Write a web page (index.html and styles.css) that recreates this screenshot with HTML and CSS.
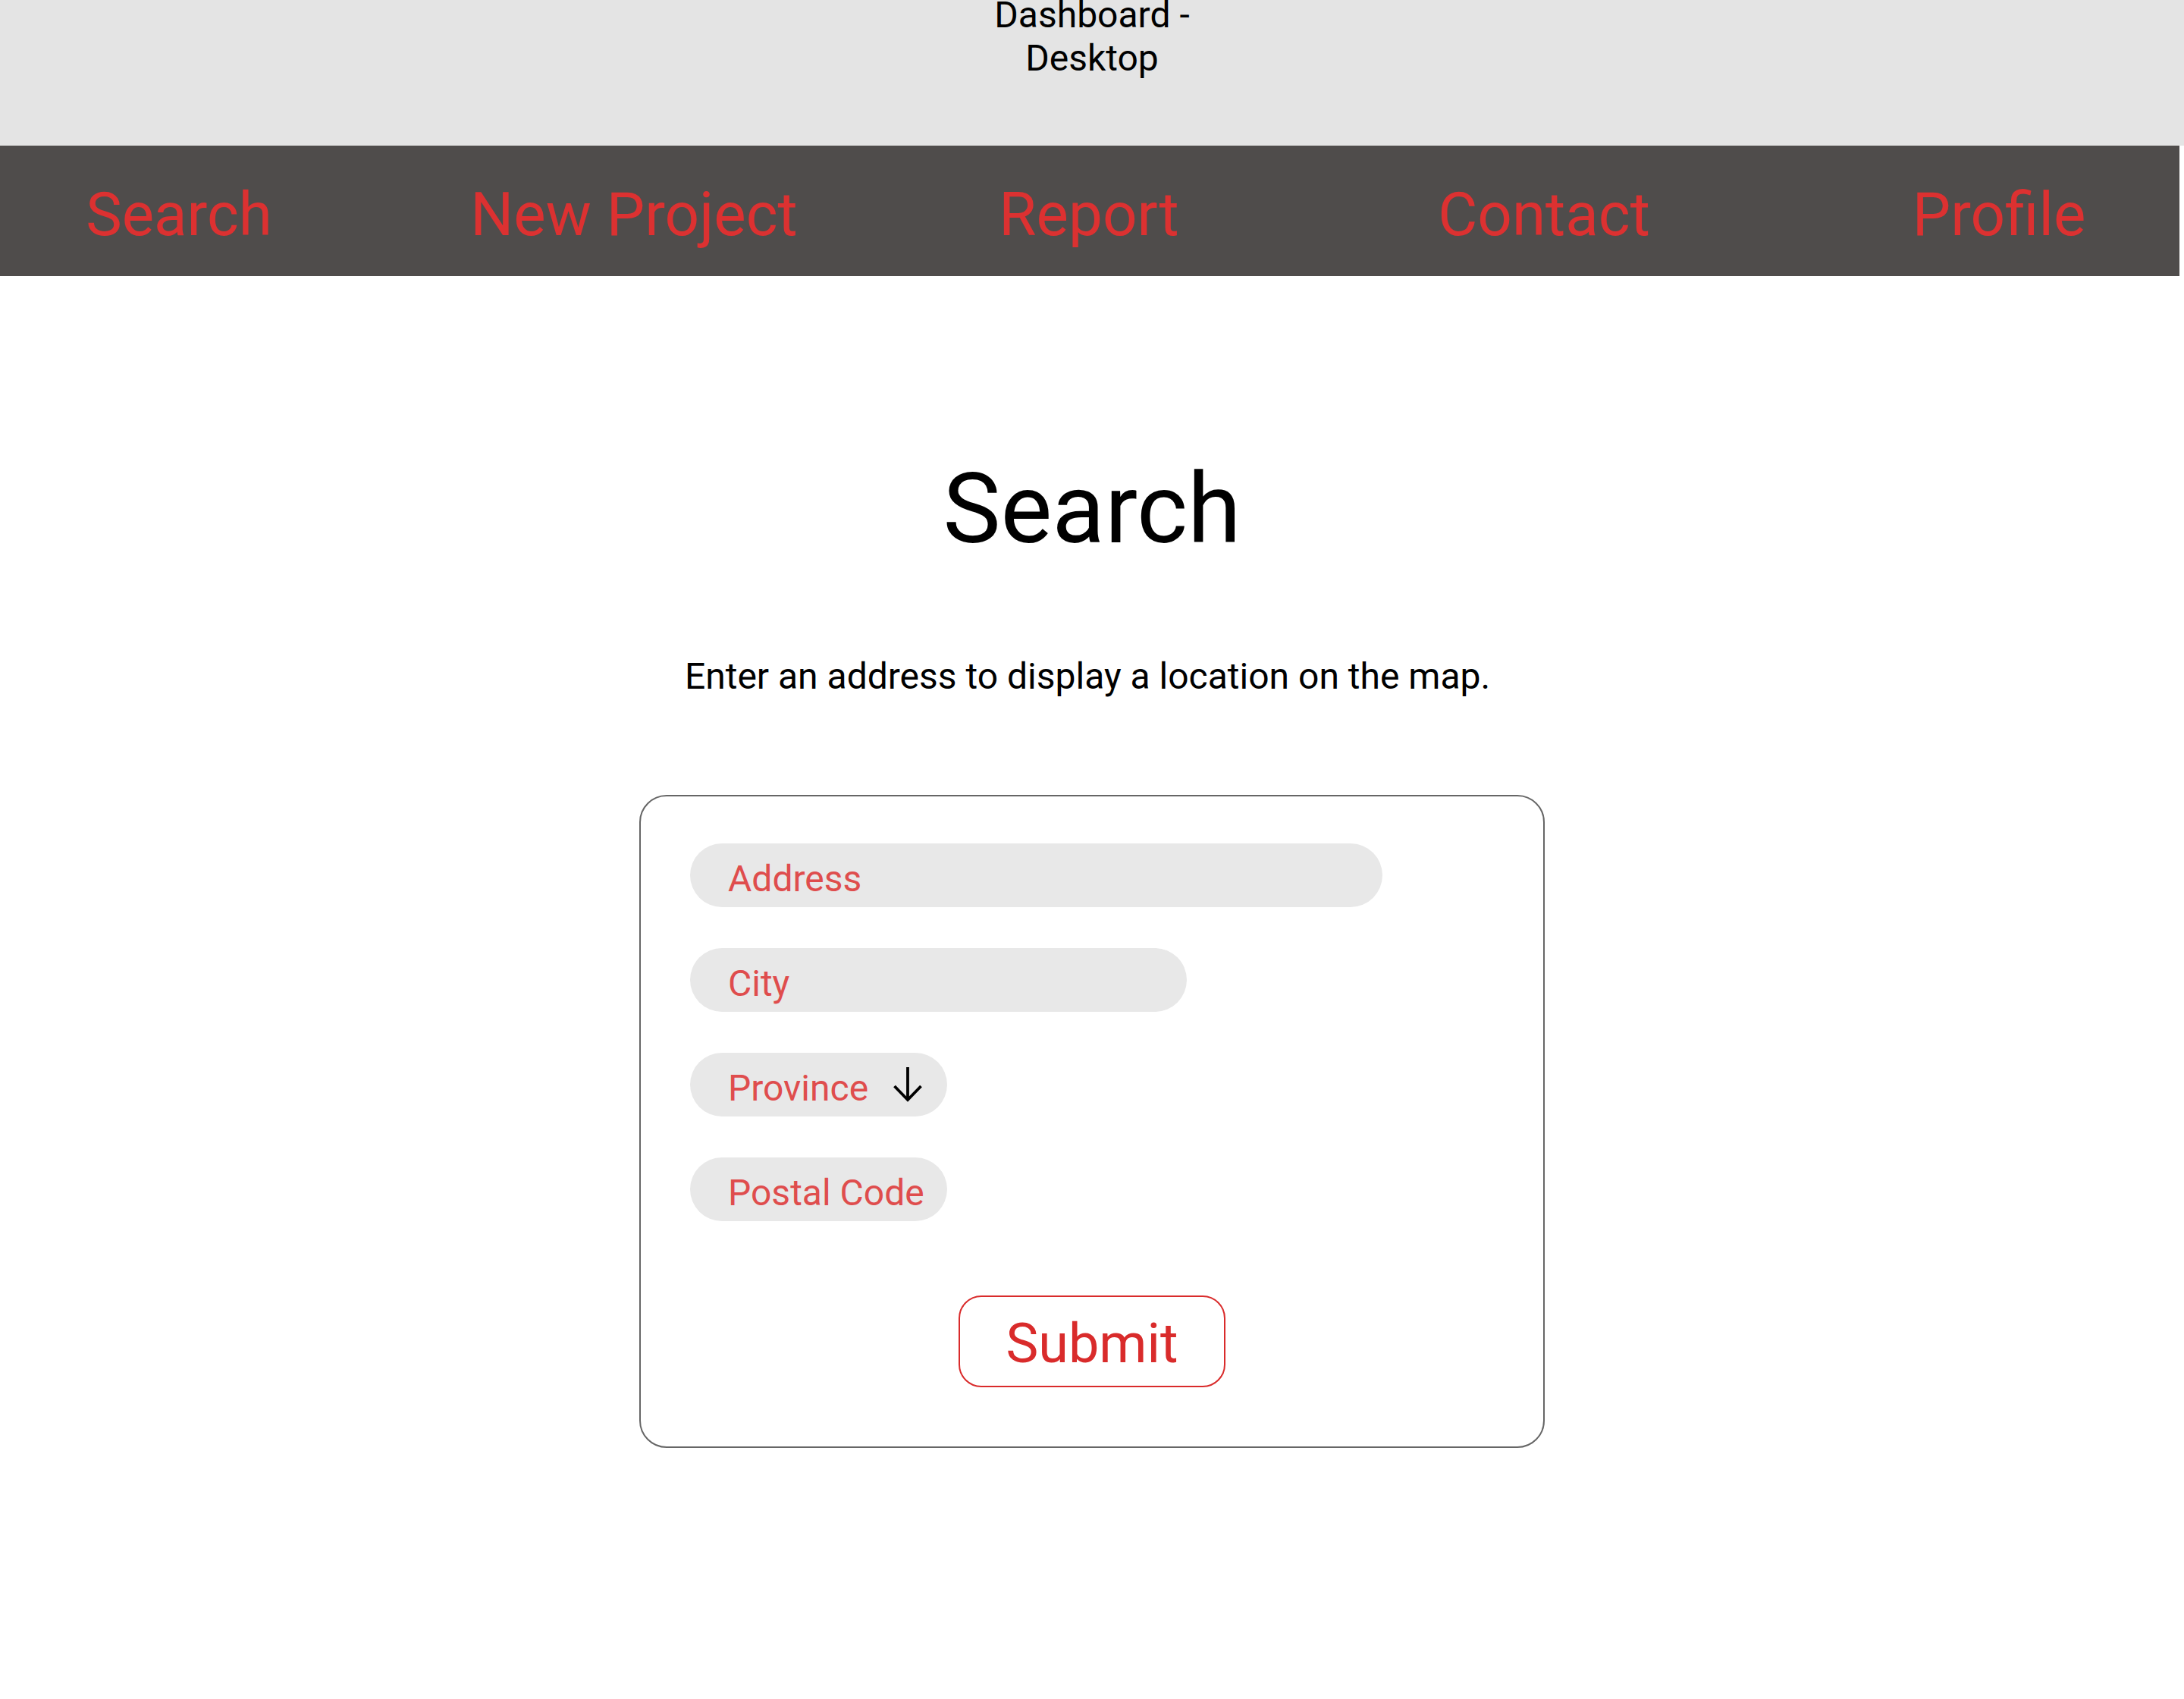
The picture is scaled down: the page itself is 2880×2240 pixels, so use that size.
FILE: index.html
```html
<!DOCTYPE html>
<html lang="en">
<head>
<meta charset="utf-8">
<title>Dashboard - Desktop</title>
<link rel="stylesheet" href="styles.css">
</head>
<body>
<header class="topbar">
  <div class="frame-title">Dashboard -<br>Desktop</div>
</header>
<nav class="nav">
  <a class="nav-item" href="#">Search</a>
  <a class="nav-item" href="#">New Project</a>
  <a class="nav-item" href="#">Report</a>
  <a class="nav-item" href="#">Contact</a>
  <a class="nav-item" href="#">Profile</a>
</nav>
<main class="main">
  <h1 class="heading">Search</h1>
  <p class="lead">Enter an address to display a location on the map.</p>
  <form class="card">
    <div class="pill pill-address">Address</div>
    <div class="pill pill-city">City</div>
    <div class="pill pill-short pill-select">
      <span>Province</span>
      <svg class="arrow" width="40" height="46" viewBox="0 0 40 46" aria-hidden="true">
        <path d="M19 0 V43" fill="none" stroke="#000" stroke-width="3.8"/>
        <path d="M1.5 25 L19 43 L36.5 25" fill="none" stroke="#000" stroke-width="3.8"/>
      </svg>
    </div>
    <div class="pill pill-short">Postal Code</div>
    <button class="submit" type="button">Submit</button>
  </form>
</main>
</body>
</html>
```

FILE: styles.css
```css
* {
  box-sizing: border-box;
}

html, body {
  margin: 0;
  padding: 0;
  background: #ffffff;
}

body {
  font-family: Roboto, "Liberation Sans", sans-serif;
  color: #000;
  width: 2880px;
}

.topbar {
  height: 192px;
  background: #e4e4e4;
  overflow: hidden;
}

.frame-title {
  width: 400px;
  margin: -9px auto 0;
  text-align: center;
  font-size: 48px;
  line-height: 57px;
}

.nav {
  width: 2874px;
  height: 172px;
  background: #4f4c4b;
  display: grid;
  grid-template-columns: repeat(5, 472px);
  column-gap: 128px;
  padding-top: 44px;
  overflow: hidden;
}

.nav-item {
  text-align: center;
  color: #dc3131;
  text-decoration: none;
  font-size: 80px;
  line-height: 94px;
  white-space: nowrap;
}

.main {
  display: flex;
  flex-direction: column;
  align-items: center;
}

.heading {
  margin: 232px 0 0;
  font-size: 128px;
  font-weight: 400;
  line-height: 150px;
}

.lead {
  margin: 118px 0 0;
  padding-right: 12px;
  font-size: 48px;
  line-height: 56px;
}

.card {
  margin-top: 128px;
  width: 1194px;
  border: 2px solid #666666;
  border-radius: 36px;
  padding: 62px 65px 78px;
  display: flex;
  flex-direction: column;
  align-items: flex-start;
  gap: 54px;
}

.pill {
  height: 84px;
  border-radius: 42px;
  background: #e8e8e8;
  color: #df4d4d;
  font-size: 48px;
  line-height: 56px;
  padding: 9px 0 0 50px;
  display: flex;
  align-items: center;
  white-space: nowrap;
}

.pill-address {
  width: 913px;
}

.pill-city {
  width: 655px;
}

.pill-short {
  width: 339px;
}

.pill-select {
  gap: 33px;
}

.arrow {
  display: block;
  margin-top: -9px;
  width: 40px;
  height: 46px;
}

.submit {
  margin-top: 44px;
  align-self: center;
  width: 352px;
  height: 121px;
  border: 2px solid #d92b2b;
  border-radius: 30px;
  background: #fff;
  color: #d92b2b;
  font-family: Roboto, "Liberation Sans", sans-serif;
  font-size: 72px;
  line-height: 84px;
  padding: 6px 0 0;
  display: flex;
  align-items: center;
  justify-content: center;
}
```
